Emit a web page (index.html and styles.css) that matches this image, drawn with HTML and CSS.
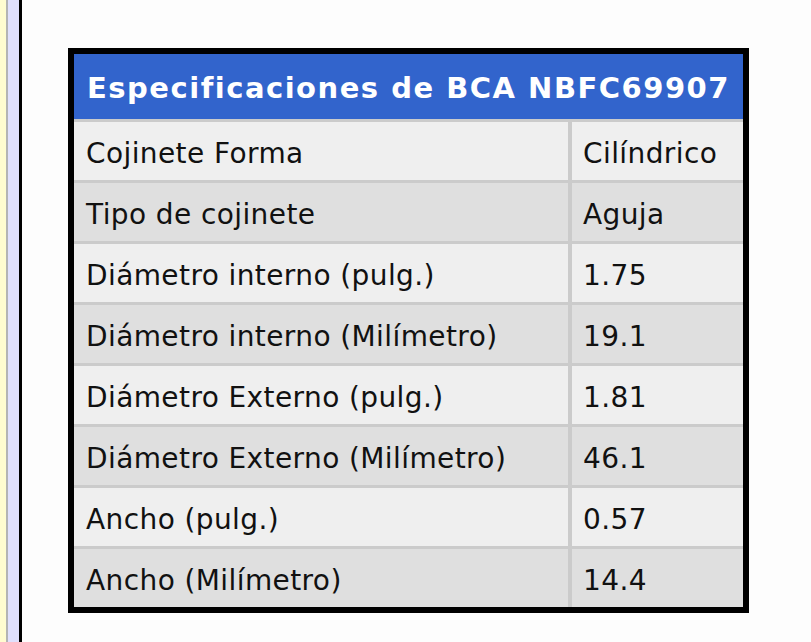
FILE: index.html
```html
<!DOCTYPE html>
<html lang="es">
<head>
<meta charset="utf-8">
<title>Especificaciones de BCA NBFC69907</title>
<link rel="stylesheet" href="styles.css">
</head>
<body>
<div class="page">
  <div class="rail">
    <div class="rail-yellow"></div>
    <div class="rail-gray"></div>
    <div class="rail-lavender"></div>
    <div class="rail-black"></div>
  </div>
  <main class="content">
    <table class="specs">
      <colgroup>
        <col class="col-label">
        <col class="col-value">
      </colgroup>
      <thead>
        <tr><th colspan="2">Especificaciones de BCA NBFC69907</th></tr>
      </thead>
      <tbody>
        <tr class="odd"><td class="label">Cojinete Forma</td><td class="value">Cilíndrico</td></tr>
        <tr class="even"><td class="label">Tipo de cojinete</td><td class="value">Aguja</td></tr>
        <tr class="odd"><td class="label">Diámetro interno (pulg.)</td><td class="value">1.75</td></tr>
        <tr class="even"><td class="label">Diámetro interno (Milímetro)</td><td class="value">19.1</td></tr>
        <tr class="odd"><td class="label">Diámetro Externo (pulg.)</td><td class="value">1.81</td></tr>
        <tr class="even"><td class="label">Diámetro Externo (Milímetro)</td><td class="value">46.1</td></tr>
        <tr class="odd"><td class="label">Ancho (pulg.)</td><td class="value">0.57</td></tr>
        <tr class="even"><td class="label">Ancho (Milímetro)</td><td class="value">14.4</td></tr>
      </tbody>
    </table>
  </main>
</div>
</body>
</html>
```

FILE: styles.css
```css
html, body {
  margin: 0;
  padding: 0;
  background: #fdfdfd;
}

body {
  font-family: "DejaVu Sans", Verdana, sans-serif;
  color: #111;
}

.page {
  display: flex;
  min-height: 642px;
}

.rail {
  display: flex;
  flex: 0 0 auto;
}

.rail-yellow { width: 6px; background: #fffcd0; }
.rail-gray { width: 2px; background: #b4b4b4; }
.rail-lavender { width: 11px; background: #e0e0fc; }
.rail-black { width: 3px; background: #000; }

.content {
  flex: 1;
  padding: 48px 0 0 46px;
  background: #fdfdfd;
}

.specs {
  width: 681px;
  border: 6px solid #000;
  border-collapse: separate;
  border-spacing: 0;
  font-size: 28px;
  line-height: 1;
  table-layout: fixed;
}

.col-label { width: 498px; }
.col-value { width: 171px; }

.specs th {
  background: #3264cc;
  color: #fff;
  font-size: 29px;
  font-weight: bold;
  letter-spacing: 1.5px;
  text-align: left;
  height: 65px;
  padding: 3px 0 0 13px;
  box-sizing: border-box;
  vertical-align: middle;
  white-space: nowrap;
}

.specs td {
  border-top: 3px solid #cbcbcb;
  height: 61px;
  box-sizing: border-box;
  padding: 5px 0 0 12px;
  vertical-align: middle;
  white-space: nowrap;
  letter-spacing: 0.4px;
}

.specs td.label {
  border-right: 4px solid #cbcbcb;
}

.specs td.value {
  padding-left: 11px;
}

.specs tr.odd td { background: #efefef; }
.specs tr.even td { background: #dfdfdf; }
```
